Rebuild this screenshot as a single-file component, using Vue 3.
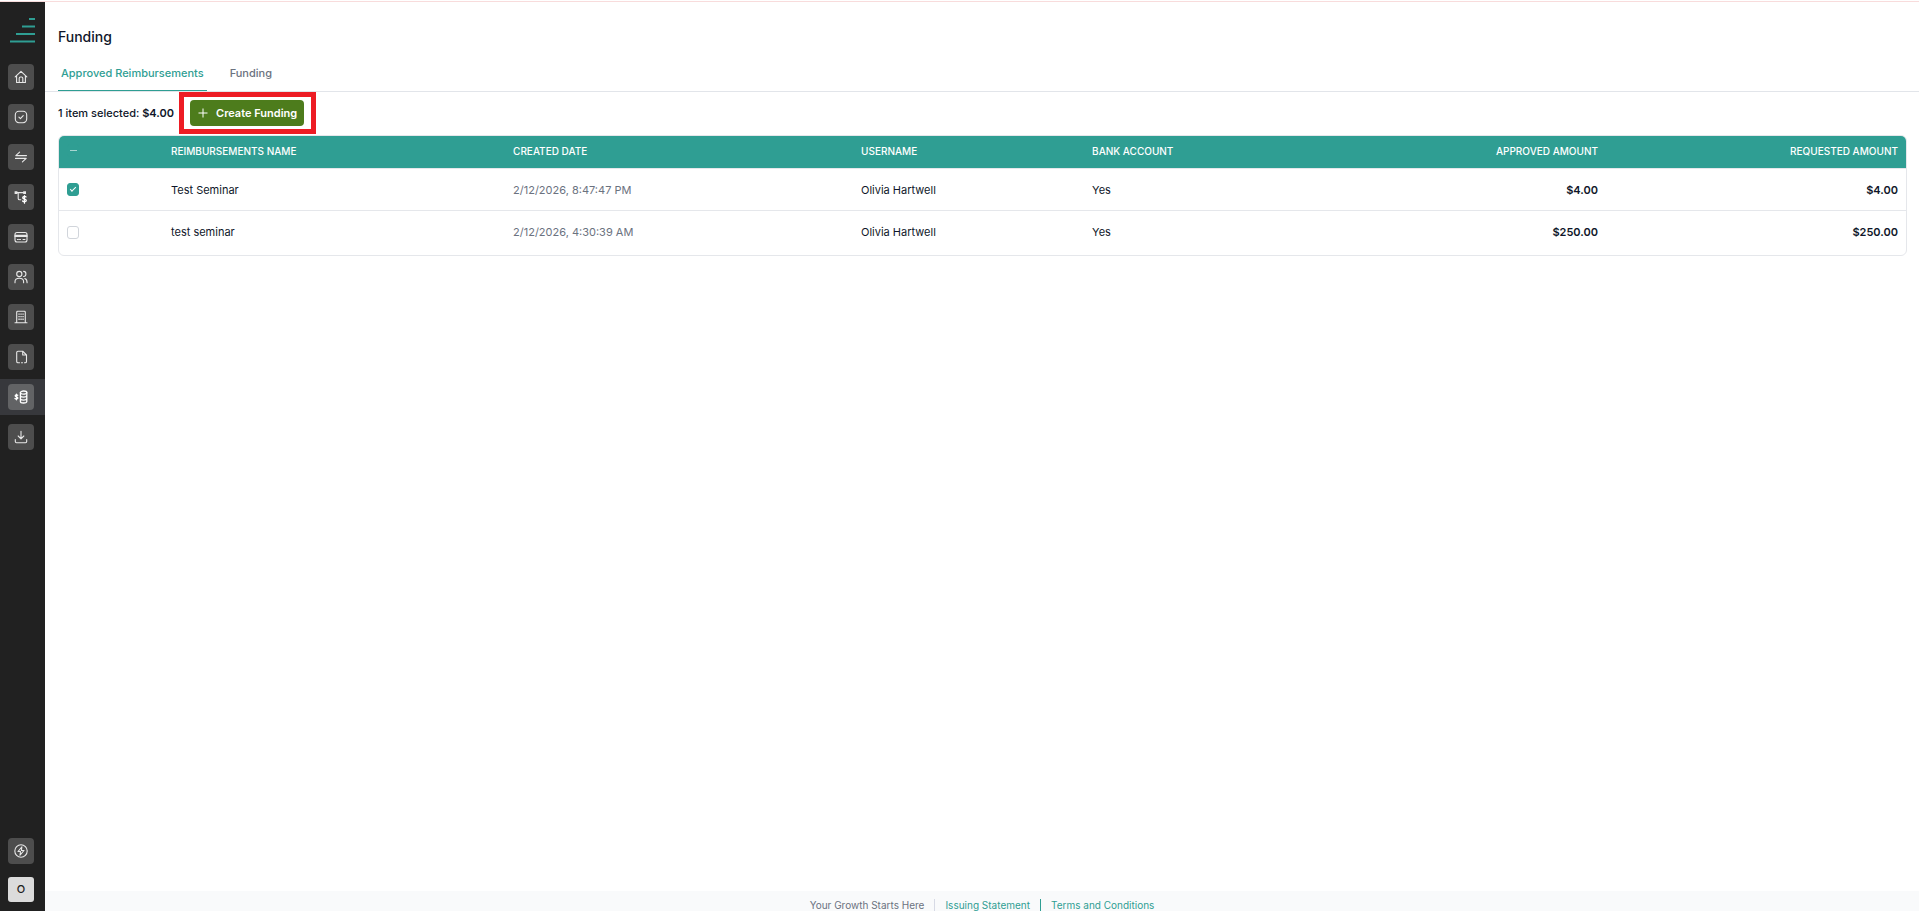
<script setup lang="js">
import { computed, ref } from 'vue';

const navItems = [
  { name: 'Home', icon: 'home' },
  { name: 'Approvals', icon: 'check' },
  { name: 'Transfers', icon: 'swap' },
  { name: 'Workflows', icon: 'flow' },
  { name: 'Cards', icon: 'card' },
  { name: 'Users', icon: 'users' },
  { name: 'Company', icon: 'building' },
  { name: 'Documents', icon: 'file' },
  { name: 'Funding', icon: 'funding', active: true },
  { name: 'Downloads', icon: 'download' },
];

const rows = ref([
  { id: 1, name: 'Test Seminar', date: '2/12/2026, 8:47:47 PM', user: 'Olivia Hartwell', bank: 'Yes', approved: 4, requested: 4, selected: true },
  { id: 2, name: 'test seminar', date: '2/12/2026, 4:30:39 AM', user: 'Olivia Hartwell', bank: 'Yes', approved: 250, requested: 250, selected: false },
]);

const selectedRows = computed(() => rows.value.filter((row) => row.selected));
const allSelected = computed(() => selectedRows.value.length === rows.value.length);
const someSelected = computed(() => selectedRows.value.length > 0 && !allSelected.value);
const total = computed(() => selectedRows.value.reduce((sum, row) => sum + row.approved, 0));

function money(value) {
  return `$${value.toFixed(2)}`;
}

function toggleAll(event) {
  rows.value.forEach((row) => {
    row.selected = event.target.checked;
  });
}
</script>

<template>
  <div class="page">
    <div class="topLine"></div>
    <div class="layout">
      <aside class="sidebar">
        <svg class="logo" viewBox="0 0 25 25" aria-hidden="true">
          <path d="M19 0h6v2h-6zM12 7.5h13v2H12zM6 15h19v2H6zM0 22.5h25v2H0z" fill="#2f9e93" />
        </svg>
        <nav class="nav">
          <a v-for="item in navItems" :key="item.name" href="#" class="navItem" :class="{ active: item.active }" :aria-label="item.name">
            <span class="iconBox">
              <svg class="icon" viewBox="0 0 14 14">
                <template v-if="item.icon === 'home'">
                  <path d="M1.2 6.8 7 1.4l5.8 5.4M2.6 6v6.5h8.8V6M5.2 12.5V8.2c0-.7.5-1.2 1.2-1.2h1.2c.7 0 1.2.5 1.2 1.2v4.3" />
                </template>
                <template v-else-if="item.icon === 'check'">
                  <rect x="1.3" y="1.3" width="11.4" height="11.4" rx="3.6" />
                  <path d="m4.9 7.1 1.5 1.5 2.8-3" />
                </template>
                <template v-else-if="item.icon === 'swap'">
                  <path d="M12.5 5.6H1.8l3.8-3.4M1.5 8.4h10.7l-3.8 3.4" />
                </template>
                <template v-else-if="item.icon === 'flow'">
                  <path d="M2 2.6h9M4.2 2.6v5.8c0 .9.4 1.3 1.3 1.3h1.3" />
                  <path class="solid" d="M.6 1.2h2.8v2.8H.6zM9.2 1.2h2.8v2.8H9.2z" />
                  <path class="bold" d="M12 6.9c-.6-.7-3.3-.7-3.3.9 0 1.7 3.6.8 3.6 2.6 0 1.6-2.9 1.6-3.7.6M10.5 5.6v7.6" />
                </template>
                <template v-else-if="item.icon === 'card'">
                  <rect x="1" y="2.5" width="12" height="9.5" rx="2" />
                  <path d="M1 5.2h12M1 6.4h12M3.4 9.5h1M5.5 9.5h1M9 9.5h2" />
                </template>
                <template v-else-if="item.icon === 'users'">
                  <circle cx="5.3" cy="4" r="2.6" />
                  <path d="M1 12.7v-1c0-2 1.7-3.4 4.3-3.4s4.3 1.4 4.3 3.4v1M9.6 1.4c3.1.2 3.1 4.9 0 5.1M10.8 8.6c1.6.5 2.3 1.6 2.3 4.1" />
                </template>
                <template v-else-if="item.icon === 'building'">
                  <path d="M1 12.7h12M2.7 12.5V2.2c0-.5.4-.9.9-.9h6.8c.5 0 .9.4.9.9v10.3" />
                  <path class="solid" d="M4.4 3.4h1.3v1.3H4.4zM6.4 3.4h1.3v1.3H6.4zM8.4 3.4h1.3v1.3H8.4zM4.4 6h1.3v1.3H4.4zM6.4 6h1.3v1.3H6.4zM8.4 6h1.3v1.3H8.4zM4.4 8.6h1.3v1.3H4.4zM6.4 8.6h1.3v1.3H6.4zM8.4 8.6h1.3v1.3H8.4z" />
                </template>
                <template v-else-if="item.icon === 'file'">
                  <path d="M5.5 12.8H4c-.8 0-1.3-.5-1.3-1.3v-9c0-.8.5-1.3 1.3-1.3h4.700L12.500 5v6.500c0 .8-.5 1.300-1.300 1.300h-.7M7.500 12.800h1M8.700 1.200V5h3.800" />
                </template>
                <template v-else-if="item.icon === 'funding'">
                  <path class="bold" d="M3.8 5.2c-.6-.5-2.6-.5-2.6.6 0 1.3 2.7.8 2.7 2.2 0 1.2-2.2 1.2-2.9.5M2.5 4.2v5.6" />
                  <ellipse class="bold" cx="9.6" cy="2.6" rx="3.2" ry="1.6" />
                  <path class="bold" d="M6.4 2.6v8.8c0 2.1 6.4 2.1 6.4 0V2.6M6.4 5.5c0 2.1 6.4 2.1 6.4 0M6.4 8.5c0 2.1 6.4 2.1 6.4 0" />
                </template>
                <template v-else>
                  <path d="M7 1.3v7.4M4.2 6 7 8.8 9.8 6M1.3 9.5v2c0 .8.5 1.2 1.2 1.2h9c.7 0 1.2-.4 1.2-1.2v-2" />
                </template>
              </svg>
            </span>
          </a>
        </nav>
        <div class="sidebarBottom">
          <button type="button" class="iconBox" aria-label="Quick actions">
            <svg class="icon" viewBox="0 0 14 14">
              <circle cx="7" cy="7" r="6.2" />
              <path d="M7.9 2.8 4 7.5h2.5L6 11.2l4-4.7H7.4z" />
            </svg>
          </button>
          <button type="button" class="avatar">O</button>
        </div>
      </aside>

      <div class="content">
        <main class="main">
          <h1 class="title">Funding</h1>
          <nav class="tabs">
            <a href="#" class="tab tabActive">Approved Reimbursements</a>
            <a href="#" class="tab">Funding</a>
          </nav>
          <div class="toolbar">
            <p class="summary">{{ selectedRows.length }} item selected: <strong>{{ money(total) }}</strong></p>
            <div class="highlight">
              <button type="button" class="createButton">
                <svg class="plus" viewBox="0 0 10 10"><path d="M5 .5v9M.5 5h9" /></svg>
                Create Funding
              </button>
            </div>
          </div>
          <div class="tableWrap">
            <table class="table">
              <colgroup>
                <col class="colCheck">
                <col class="colName">
                <col class="colDate">
                <col class="colUser">
                <col class="colBank">
                <col class="colApproved">
                <col>
              </colgroup>
              <thead>
                <tr>
                  <th>
                    <input type="checkbox" class="checkbox" aria-label="Select all" :checked="allSelected" :indeterminate="someSelected" @change="toggleAll">
                  </th>
                  <th>REIMBURSEMENTS NAME</th>
                  <th>CREATED DATE</th>
                  <th>USERNAME</th>
                  <th>BANK ACCOUNT</th>
                  <th class="amount">APPROVED AMOUNT</th>
                  <th class="amount">REQUESTED AMOUNT</th>
                </tr>
              </thead>
              <tbody>
                <tr v-for="row in rows" :key="row.id">
                  <td><input v-model="row.selected" type="checkbox" class="checkbox" :aria-label="`Select ${row.name}`"></td>
                  <td>{{ row.name }}</td>
                  <td class="date">{{ row.date }}</td>
                  <td>{{ row.user }}</td>
                  <td>{{ row.bank }}</td>
                  <td class="amount">{{ money(row.approved) }}</td>
                  <td class="amount">{{ money(row.requested) }}</td>
                </tr>
              </tbody>
            </table>
          </div>
        </main>
        <footer class="footer">
          <span>Your Growth Starts Here</span>
          <a href="#" class="footerLink">Issuing Statement</a>
          <a href="#" class="footerLink footerLinkLast">Terms and Conditions</a>
        </footer>
      </div>
    </div>
  </div>
</template>

<style>
body {
  margin: 0;
  background: #fff;
}
</style>

<style scoped>
.page {
  height: 100vh;
  display: flex;
  flex-direction: column;
  overflow: hidden;
  box-sizing: border-box;
  font-family: Inter, "Liberation Sans", sans-serif;
  font-size: 11px;
  line-height: 16px;
  color: #0f172a;
}

.topLine {
  height: 1px;
  flex-shrink: 0;
  border-bottom: 1px solid #f8dcdc;
}

.layout {
  display: flex;
  flex: 1;
  min-height: 0;
}

.sidebar {
  width: 45px;
  flex-shrink: 0;
  display: flex;
  flex-direction: column;
  box-sizing: border-box;
  padding: 16px 0 9px;
  background: #212121;
}

.logo {
  width: 25px;
  height: 25px;
  margin: 0 0 16px 10px;
  flex-shrink: 0;
}

.nav {
  display: flex;
  flex-direction: column;
  gap: 4px;
}

.navItem {
  padding: 5px 8px;
}

.navItem.active {
  background: #37383c;
}

.iconBox {
  width: 26px;
  height: 26px;
  padding: 0;
  border: 0;
  border-radius: 4px;
  display: flex;
  align-items: center;
  justify-content: center;
  background: #4d4d4d;
}

.active .iconBox {
  background: #626365;
}

.icon {
  width: 14px;
  height: 14px;
  fill: none;
  stroke: #e8e8e8;
  stroke-width: 1.1;
  stroke-linecap: round;
  stroke-linejoin: round;
}

.solid {
  fill: #e8e8e8;
  stroke: none;
}

.bold {
  stroke: #fff;
  stroke-width: 1.3;
}

.sidebarBottom {
  margin-top: auto;
  padding: 0 8px;
  display: flex;
  flex-direction: column;
  gap: 13px;
}

.avatar {
  width: 26px;
  height: 25px;
  padding: 0;
  border: 0;
  border-radius: 3px;
  background: #dbdbdb;
  color: #222;
  font: 500 11px/25px Inter, sans-serif;
}

.content {
  flex: 1;
  min-width: 0;
  display: flex;
  flex-direction: column;
}

.main {
  flex: 1;
  min-height: 0;
}

.title {
  margin: 0;
  padding: 25px 13px 0;
  font-size: 14px;
  font-weight: 500;
  line-height: 20px;
}

.tabs {
  display: flex;
  gap: 20px;
  padding: 16px 13px 0;
  border-bottom: 1px solid #e2e5ea;
}

.tab {
  padding: 2px 3px 9px;
  border-bottom: 1px solid transparent;
  color: #6b7280;
  font-weight: 500;
  text-decoration: none;
}

.tabActive {
  color: #2f9e93;
  border-color: #2f9e93;
}

.toolbar {
  display: flex;
  align-items: center;
  gap: 5px;
  padding: 0 13px;
}

.summary {
  margin: 0;
  font-weight: 500;
}

.summary strong {
  font-weight: 600;
}

.highlight {
  padding: 3px 7px 3px 6px;
  border: 5px solid #ed1c24;
}

.createButton {
  display: flex;
  align-items: center;
  gap: 8px;
  height: 26px;
  padding: 0 7px 0 8px;
  border: 0;
  border-radius: 4px;
  background: #4d7c1c;
  color: #fff;
  font: 600 11px/16px Inter, sans-serif;
}

.plus {
  width: 10px;
  height: 10px;
  fill: none;
  stroke: #fff;
  stroke-width: 1;
}

.tableWrap {
  margin: 1px 12px 0 13px;
  border: 1px solid #e5e7eb;
  border-radius: 6px;
  overflow: hidden;
}

.table {
  width: 100%;
  table-layout: fixed;
  border-collapse: separate;
  border-spacing: 0;
}

.colCheck {
  width: 5.63%;
}

.colName {
  width: 18.52%;
}

.colDate {
  width: 18.84%;
}

.colUser {
  width: 12.51%;
}

.colBank {
  width: 12.26%;
}

.colApproved {
  width: 16%;
}

th,
td {
  padding: 0 8px;
  text-align: left;
  white-space: nowrap;
}

th {
  height: 29px;
  padding-bottom: 3px;
  background: #2f9e93;
  color: #fff;
  font-size: 10px;
  font-weight: 500;
  line-height: 12px;
  border-bottom: 1px solid #e5e7eb;
}

td {
  height: 41px;
  border-bottom: 1px solid #e5e7eb;
}

tbody tr:last-child td {
  height: 42px;
  padding-bottom: 2px;
  border-bottom: 0;
}

.date {
  color: #6b7280;
}

.amount {
  text-align: right;
}

td.amount {
  font-weight: 600;
}

.checkbox {
  appearance: none;
  display: grid;
  place-items: center;
  width: 12px;
  height: 13px;
  margin: 0;
  box-sizing: border-box;
  border: 1px solid #d1d5db;
  border-radius: 3px;
  background: #fff;
}

.checkbox:checked,
.checkbox:indeterminate {
  border-color: #2f9e93;
  background: #2f9e93;
}

.checkbox:checked::after {
  content: "";
  width: 5px;
  height: 2px;
  margin-bottom: 2px;
  border-left: 1px solid #fff;
  border-bottom: 1px solid #fff;
  transform: rotate(-45deg);
}

.checkbox:indeterminate::after {
  content: "";
  width: 7px;
  height: 1px;
  background: #a7d5d0;
}

.footer {
  height: 20px;
  flex-shrink: 0;
  box-sizing: border-box;
  padding-top: 8px;
  display: flex;
  justify-content: center;
  gap: 10px;
  overflow: hidden;
  background: #f9fafb;
  color: #6b7280;
  font-size: 10px;
  line-height: 12px;
}

.footerLink {
  padding-left: 10px;
  border-left: 1px solid #d7dae5;
  color: #2f9e93;
  text-decoration: none;
}

.footerLinkLast {
  border-color: #2f9e93;
}
</style>
